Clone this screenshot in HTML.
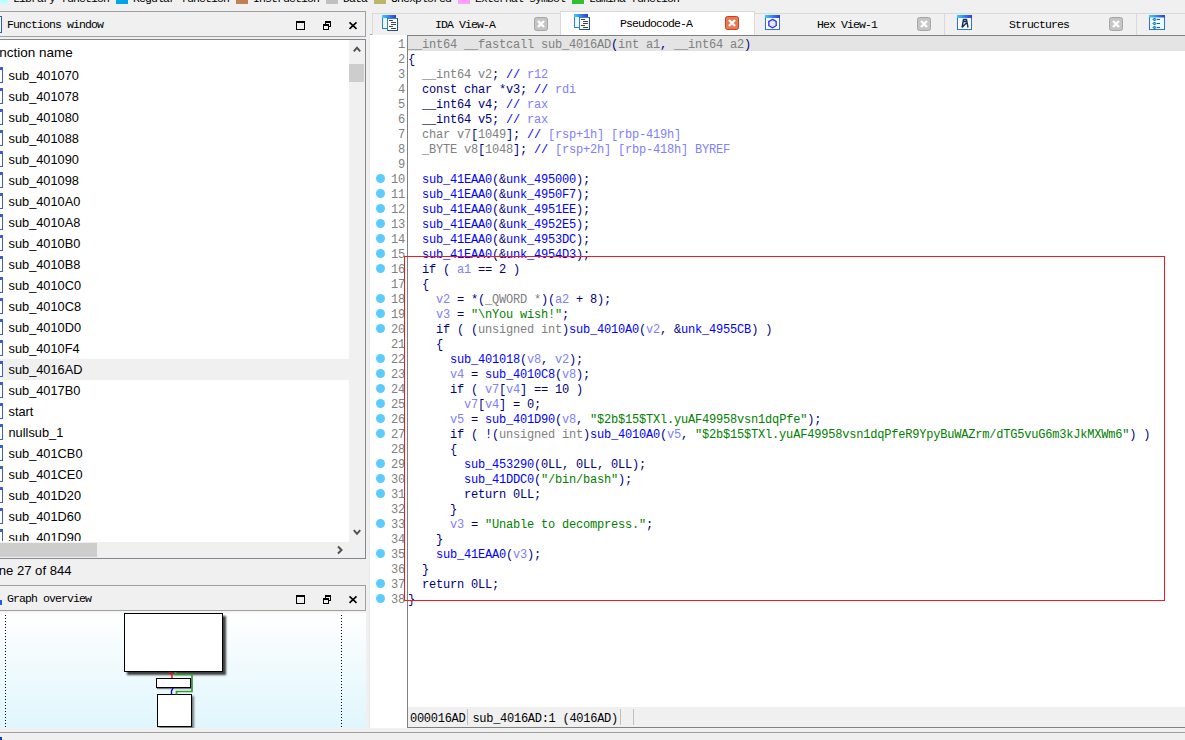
<!DOCTYPE html>
<html><head><meta charset="utf-8"><title>IDA</title>
<style>
*{box-sizing:border-box;margin:0;padding:0}
html,body{width:1185px;height:740px;overflow:hidden;background:#f0f0f0}
body{position:relative;font-family:"Liberation Sans",sans-serif;color:#000}
.abs,.abs *{position:absolute}
i{display:block;font-style:normal}
/* SimSun-like UI text */
.ss{font-family:"Liberation Mono",monospace;font-size:11.5px;letter-spacing:-0.9px;line-height:14px;white-space:pre;color:#000}
/* legend */
.lg{position:absolute;top:-8px;height:12px;width:12px}
.lt{position:absolute;top:-8px}
/* panels */
.ttl{position:absolute;left:-1px;width:367px;height:26px;border:1px solid #a0a0a0;background:#f0f0f0}
/* function list */
#fl{position:absolute;left:-1px;top:39px;width:367px;height:520px;background:#fff;border:1px solid #828790;overflow:hidden}
.fr{position:absolute;left:0;width:349px;height:21px;font-size:12.8px;line-height:21px;white-space:pre}
.fr span{position:absolute;left:8.500px;top:0}
.fr.sel{background:#f0f0f0}
.fi{position:absolute;left:-6px;top:2px;width:9px;height:16px;border:1px solid #3a5fcd;border-top:3px solid #3a5fcd;background:#fff}
/* code */
#code{position:absolute;left:370px;top:35px;width:815px;height:693px;background:#fff;overflow:hidden}
.mono{font-family:"Liberation Mono",monospace;font-size:12px;letter-spacing:-0.2px;white-space:pre}
.ln{position:absolute;left:372px;width:33px;height:15px;line-height:15px;text-align:right;color:#808080;font-family:"Liberation Mono",monospace;font-size:12px;letter-spacing:-0.2px}
.cl{position:absolute;left:408px;height:15px;line-height:15px;font-family:"Liberation Mono",monospace;font-size:12px;letter-spacing:-0.2px;white-space:pre}
.dot{position:absolute;left:376px;width:9px;height:9px;border-radius:50%;background:#5ccbff}
.n{color:#000080}.b{color:#0000ff}.g{color:#808080}.p{color:#8080ff}.s{color:#008000}.c{color:#8080ff}
/* tabs */
.tab{position:absolute;top:13px;height:22px;background:#f0f0f0;border:1px solid #d9d9d9;border-bottom:none}
.tab.act{top:11px;height:24px;background:#fff;border-color:#d9d9d9}
.tx{position:absolute;top:18px}
.cbs{position:absolute}
.cb{position:absolute;width:14px;height:14px;border-radius:3px;background:#b4b4b4;border:1px solid #9a9a9a}
.cb.r{background:#db6448;border-color:#c6492f}
.cb:before,.cb:after{content:"";position:absolute;left:2px;top:5px;width:8px;height:2px;background:#fff;transform:rotate(45deg)}
.cb:after{transform:rotate(-45deg)}
</style></head><body>

<!-- legend strip -->
<i class="lg" style="left:-4px;background:#c0ffff"></i><span class="ss lt" style="left:13px">Library function</span>
<i class="lg" style="left:116px;background:#00a2e8"></i><span class="ss lt" style="left:133px">Regular function</span>
<i class="lg" style="left:236px;background:#c08050"></i><span class="ss lt" style="left:253px">Instruction</span>
<i class="lg" style="left:326px;background:#c0c0c0"></i><span class="ss lt" style="left:343px">Data</span>
<i class="lg" style="left:374px;background:#b8b868"></i><span class="ss lt" style="left:391px">Unexplored</span>
<i class="lg" style="left:458px;background:#ffa0ff"></i><span class="ss lt" style="left:475px">External symbol</span>
<i class="lg" style="left:572px;background:#30c030"></i><span class="ss lt" style="left:589px">Lumina function</span>

<!-- Functions window title -->
<div class="ttl" style="top:11px"></div>
<i style="position:absolute;left:-2px;top:16px;width:4px;height:17px;border:1px solid #2a5bd7;background:#fff"></i>
<span class="ss" style="position:absolute;left:7px;top:18px">Functions window</span>
<svg style="position:absolute;left:294px;top:19px" width="66" height="12" viewBox="0 0 66 12" fill="none" stroke="#000">
<rect x="2.500" y="2.500" width="8" height="8"/><path d="M2 3h9" stroke-width="2"/>
<rect x="31.500" y="2.500" width="5" height="5"/><path d="M31 3h6" stroke-width="2"/>
<rect x="29.500" y="5.500" width="5" height="5" fill="#f0f0f0"/><path d="M29 6h6" stroke-width="2"/>
<path d="M55.500 3.300l7 6.500M62.500 3.300l-7 6.500" stroke-width="1.600"/>
</svg>

<!-- function list -->
<div id="fl">
<div style="position:absolute;left:0;top:5px;font-size:13.500px;line-height:16px;white-space:pre"><span style="position:absolute;left:-16.500px;top:0">Function name</span></div>
</div>
<div id="flrows" style="position:absolute;left:0;top:0;width:349px;height:541px;overflow:hidden">
<div class="fr" style="top:65px"><i class="fi"></i><span>sub_401070</span></div>
<div class="fr" style="top:86px"><i class="fi"></i><span>sub_401078</span></div>
<div class="fr" style="top:107px"><i class="fi"></i><span>sub_401080</span></div>
<div class="fr" style="top:128px"><i class="fi"></i><span>sub_401088</span></div>
<div class="fr" style="top:149px"><i class="fi"></i><span>sub_401090</span></div>
<div class="fr" style="top:170px"><i class="fi"></i><span>sub_401098</span></div>
<div class="fr" style="top:191px"><i class="fi"></i><span>sub_4010A0</span></div>
<div class="fr" style="top:212px"><i class="fi"></i><span>sub_4010A8</span></div>
<div class="fr" style="top:233px"><i class="fi"></i><span>sub_4010B0</span></div>
<div class="fr" style="top:254px"><i class="fi"></i><span>sub_4010B8</span></div>
<div class="fr" style="top:275px"><i class="fi"></i><span>sub_4010C0</span></div>
<div class="fr" style="top:296px"><i class="fi"></i><span>sub_4010C8</span></div>
<div class="fr" style="top:317px"><i class="fi"></i><span>sub_4010D0</span></div>
<div class="fr" style="top:338px"><i class="fi"></i><span>sub_4010F4</span></div>
<div class="fr sel" style="top:359px"><i class="fi"></i><span>sub_4016AD</span></div>
<div class="fr" style="top:380px"><i class="fi"></i><span>sub_4017B0</span></div>
<div class="fr" style="top:401px"><i class="fi"></i><span>start</span></div>
<div class="fr" style="top:422px"><i class="fi"></i><span>nullsub_1</span></div>
<div class="fr" style="top:443px"><i class="fi"></i><span>sub_401CB0</span></div>
<div class="fr" style="top:464px"><i class="fi"></i><span>sub_401CE0</span></div>
<div class="fr" style="top:485px"><i class="fi"></i><span>sub_401D20</span></div>
<div class="fr" style="top:506px"><i class="fi"></i><span>sub_401D60</span></div>
<div class="fr" style="top:527px"><i class="fi"></i><span>sub_401D90</span></div>
</div>
<!-- v scrollbar -->
<div style="position:absolute;left:349px;top:40px;width:16px;height:502px;background:#f0f0f0"></div>
<div style="position:absolute;left:349px;top:64px;width:15px;height:18px;background:#cdcdcd"></div>
<svg style="position:absolute;left:352px;top:45px" width="10" height="8" viewBox="0 0 10 8" fill="none" stroke="#505050" stroke-width="2"><path d="M1.800 6.300l3.200-3.600 3.200 3.600"/></svg>
<svg style="position:absolute;left:352px;top:528px" width="10" height="8" viewBox="0 0 10 8" fill="none" stroke="#505050" stroke-width="2"><path d="M1.800 2.200l3.200 3.600 3.200-3.600"/></svg>
<!-- h scrollbar -->
<div style="position:absolute;left:0;top:542px;width:365px;height:16px;background:#f0f0f0"></div>
<div style="position:absolute;left:0;top:543px;width:97px;height:14px;background:#cdcdcd"></div>
<svg style="position:absolute;left:336px;top:545px" width="8" height="10" viewBox="0 0 8 10" fill="none" stroke="#505050" stroke-width="2"><path d="M2 1.500l3.500 3.500-3.500 3.500"/></svg>


<div style="position:absolute;left:-11.500px;top:563px;font-size:13.100px;line-height:16px;white-space:pre">Line 27 of 844</div>

<!-- Graph overview title -->
<div class="ttl" style="top:585px"></div>
<span class="ss" style="position:absolute;left:7px;top:592px">Graph overview</span>
<svg style="position:absolute;left:294px;top:593px" width="66" height="12" viewBox="0 0 66 12" fill="none" stroke="#000">
<rect x="2.500" y="2.500" width="8" height="8"/><path d="M2 3h9" stroke-width="2"/>
<rect x="31.500" y="2.500" width="5" height="5"/><path d="M31 3h6" stroke-width="2"/>
<rect x="29.500" y="5.500" width="5" height="5" fill="#f0f0f0"/><path d="M29 6h6" stroke-width="2"/>
<path d="M55.500 3.300l7 6.500M62.500 3.300l-7 6.500" stroke-width="1.600"/>
</svg>
<!-- graph -->
<div style="position:absolute;left:0;top:611px;width:366px;height:117px;background:linear-gradient(#ffffff,#e0f6fd);overflow:hidden">
<i style="position:absolute;left:0;top:0;width:366px;height:2px;background:#f4f4f4"></i><i style="position:absolute;left:5px;top:4px;height:113px;width:1px;background:repeating-linear-gradient(#000 0,#000 1px,transparent 1px,transparent 3px)"></i>
<i style="position:absolute;left:341px;top:4px;height:113px;width:1px;background:repeating-linear-gradient(#000 0,#000 1px,transparent 1px,transparent 3px)"></i>
<i style="position:absolute;left:124px;top:2px;width:99px;height:59px;border:1px solid #000;background:#fff;box-shadow:3px 3px 2px rgba(0,0,0,.75)"></i>
<i style="position:absolute;left:156px;top:67px;width:35px;height:10px;border:1px solid #000;background:#fff;box-shadow:1px 1px 1px rgba(0,0,0,.5)"></i>
<i style="position:absolute;left:157px;top:83px;width:35px;height:33px;border:1px solid #000;background:#fff;box-shadow:2px 2px 2px rgba(0,0,0,.5)"></i>
<svg style="position:absolute;left:150px;top:60px" width="60" height="30" viewBox="0 0 60 30" fill="none"><path d="M19.500 1l2.500 3v3" stroke="#f00" stroke-width="1.400"/><path d="M25.500 1v2.500h16.500v17h-15.500v3" stroke="#3a9a3a" stroke-width="1.700"/><path d="M23 17l-1.500 3v3" stroke="#00f" stroke-width="1.400"/></svg>
</div>
<i style="position:absolute;left:-1px;top:600px;width:3px;height:5px;background:#1f5fe0"></i>
<div style="position:absolute;left:0;top:732px;width:1185px;height:1px;background:#a0a0a0"></div>
<i style="position:absolute;left:0;top:737px;width:2px;height:4px;background:#1038d8"></i>

<!-- code panel -->
<div id="code"></div>
<div style="position:absolute;left:408px;top:36px;width:777px;height:15px;background:#e4e4e4"></div>
<div style="position:absolute;left:407px;top:36px;width:1px;height:691px;background:#808080"></div>
<div style="position:absolute;left:369px;top:35px;width:1px;height:693px;background:#e9e9e9"></div>
<div class="ln" style="top:38px">1</div>
<div class="cl" style="top:38px"><span class="g">__int64 __fastcall sub_4016AD</span><span class="n">(</span><span class="g">int a1</span><span class="n">,</span><span class="g"> __int64 a2</span><span class="n">)</span></div>
<div class="ln" style="top:53px">2</div>
<div class="cl" style="top:53px"><span class="n">{</span></div>
<div class="ln" style="top:68px">3</div>
<div class="cl" style="top:68px"><span class="g">  __int64 v2</span><span class="n">; </span><span class="b">// </span><span class="c">r12</span></div>
<div class="ln" style="top:83px">4</div>
<div class="cl" style="top:83px"><span class="n">  const char *v3; </span><span class="b">// </span><span class="c">rdi</span></div>
<div class="ln" style="top:98px">5</div>
<div class="cl" style="top:98px"><span class="n">  __int64 v4; </span><span class="b">// </span><span class="c">rax</span></div>
<div class="ln" style="top:113px">6</div>
<div class="cl" style="top:113px"><span class="n">  __int64 v5; </span><span class="b">// </span><span class="c">rax</span></div>
<div class="ln" style="top:128px">7</div>
<div class="cl" style="top:128px"><span class="g">  char v7</span><span class="n">[</span><span class="g">1049</span><span class="n">]; </span><span class="b">// </span><span class="c">[rsp+1h] [rbp-419h]</span></div>
<div class="ln" style="top:143px">8</div>
<div class="cl" style="top:143px"><span class="g">  _BYTE v8</span><span class="n">[</span><span class="g">1048</span><span class="n">]; </span><span class="b">// </span><span class="c">[rsp+2h] [rbp-418h] BYREF</span></div>
<div class="ln" style="top:158px">9</div>
<div class="cl" style="top:158px"></div>
<i class="dot" style="top:174px"></i>
<div class="ln" style="top:173px">10</div>
<div class="cl" style="top:173px"><span class="b">  sub_41EAA0</span><span class="n">(&amp;</span><span class="b">unk_495000</span><span class="n">);</span></div>
<i class="dot" style="top:189px"></i>
<div class="ln" style="top:188px">11</div>
<div class="cl" style="top:188px"><span class="b">  sub_41EAA0</span><span class="n">(&amp;</span><span class="b">unk_4950F7</span><span class="n">);</span></div>
<i class="dot" style="top:204px"></i>
<div class="ln" style="top:203px">12</div>
<div class="cl" style="top:203px"><span class="b">  sub_41EAA0</span><span class="n">(&amp;</span><span class="b">unk_4951EE</span><span class="n">);</span></div>
<i class="dot" style="top:219px"></i>
<div class="ln" style="top:218px">13</div>
<div class="cl" style="top:218px"><span class="b">  sub_41EAA0</span><span class="n">(&amp;</span><span class="b">unk_4952E5</span><span class="n">);</span></div>
<i class="dot" style="top:234px"></i>
<div class="ln" style="top:233px">14</div>
<div class="cl" style="top:233px"><span class="b">  sub_41EAA0</span><span class="n">(&amp;</span><span class="b">unk_4953DC</span><span class="n">);</span></div>
<i class="dot" style="top:249px"></i>
<div class="ln" style="top:248px">15</div>
<div class="cl" style="top:248px"><span class="b">  sub_41EAA0</span><span class="n">(&amp;</span><span class="b">unk_4954D3</span><span class="n">);</span></div>
<i class="dot" style="top:264px"></i>
<div class="ln" style="top:263px">16</div>
<div class="cl" style="top:263px"><span class="n">  if ( </span><span class="p">a1</span><span class="n"> == 2 )</span></div>
<div class="ln" style="top:278px">17</div>
<div class="cl" style="top:278px"><span class="n">  {</span></div>
<i class="dot" style="top:294px"></i>
<div class="ln" style="top:293px">18</div>
<div class="cl" style="top:293px"><span class="p">    v2</span><span class="n"> = *(</span><span class="g">_QWORD *</span><span class="n">)(</span><span class="p">a2</span><span class="n"> + 8);</span></div>
<i class="dot" style="top:309px"></i>
<div class="ln" style="top:308px">19</div>
<div class="cl" style="top:308px"><span class="p">    v3</span><span class="n"> = </span><span class="s">"\nYou wish!"</span><span class="n">;</span></div>
<i class="dot" style="top:324px"></i>
<div class="ln" style="top:323px">20</div>
<div class="cl" style="top:323px"><span class="n">    if ( (</span><span class="g">unsigned int</span><span class="n">)</span><span class="b">sub_4010A0</span><span class="n">(</span><span class="p">v2</span><span class="n">, &amp;</span><span class="b">unk_4955CB</span><span class="n">) )</span></div>
<div class="ln" style="top:338px">21</div>
<div class="cl" style="top:338px"><span class="n">    {</span></div>
<i class="dot" style="top:354px"></i>
<div class="ln" style="top:353px">22</div>
<div class="cl" style="top:353px"><span class="b">      sub_401018</span><span class="n">(</span><span class="p">v8</span><span class="n">, </span><span class="p">v2</span><span class="n">);</span></div>
<i class="dot" style="top:369px"></i>
<div class="ln" style="top:368px">23</div>
<div class="cl" style="top:368px"><span class="p">      v4</span><span class="n"> = </span><span class="b">sub_4010C8</span><span class="n">(</span><span class="p">v8</span><span class="n">);</span></div>
<i class="dot" style="top:384px"></i>
<div class="ln" style="top:383px">24</div>
<div class="cl" style="top:383px"><span class="n">      if ( </span><span class="p">v7</span><span class="n">[</span><span class="p">v4</span><span class="n">] == 10 )</span></div>
<i class="dot" style="top:399px"></i>
<div class="ln" style="top:398px">25</div>
<div class="cl" style="top:398px"><span class="p">        v7</span><span class="n">[</span><span class="p">v4</span><span class="n">] = 0;</span></div>
<i class="dot" style="top:414px"></i>
<div class="ln" style="top:413px">26</div>
<div class="cl" style="top:413px"><span class="p">      v5</span><span class="n"> = </span><span class="b">sub_401D90</span><span class="n">(</span><span class="p">v8</span><span class="n">, </span><span class="s">"$2b$15$TXl.yuAF49958vsn1dqPfe"</span><span class="n">);</span></div>
<i class="dot" style="top:429px"></i>
<div class="ln" style="top:428px">27</div>
<div class="cl" style="top:428px"><span class="n">      if ( !(</span><span class="g">unsigned int</span><span class="n">)</span><span class="b">sub_4010A0</span><span class="n">(</span><span class="p">v5</span><span class="n">, </span><span class="s">"$2b$15$TXl.yuAF49958vsn1dqPfeR9YpyBuWAZrm/dTG5vuG6m3kJkMXWm6"</span><span class="n">) )</span></div>
<div class="ln" style="top:443px">28</div>
<div class="cl" style="top:443px"><span class="n">      {</span></div>
<i class="dot" style="top:459px"></i>
<div class="ln" style="top:458px">29</div>
<div class="cl" style="top:458px"><span class="b">        sub_453290</span><span class="n">(0LL, 0LL, 0LL);</span></div>
<i class="dot" style="top:474px"></i>
<div class="ln" style="top:473px">30</div>
<div class="cl" style="top:473px"><span class="b">        sub_41DDC0</span><span class="n">(</span><span class="s">"/bin/bash"</span><span class="n">);</span></div>
<i class="dot" style="top:489px"></i>
<div class="ln" style="top:488px">31</div>
<div class="cl" style="top:488px"><span class="n">        return 0LL;</span></div>
<div class="ln" style="top:503px">32</div>
<div class="cl" style="top:503px"><span class="n">      }</span></div>
<i class="dot" style="top:519px"></i>
<div class="ln" style="top:518px">33</div>
<div class="cl" style="top:518px"><span class="p">      v3</span><span class="n"> = </span><span class="s">"Unable to decompress."</span><span class="n">;</span></div>
<div class="ln" style="top:533px">34</div>
<div class="cl" style="top:533px"><span class="n">    }</span></div>
<i class="dot" style="top:549px"></i>
<div class="ln" style="top:548px">35</div>
<div class="cl" style="top:548px"><span class="b">    sub_41EAA0</span><span class="n">(</span><span class="p">v3</span><span class="n">);</span></div>
<div class="ln" style="top:563px">36</div>
<div class="cl" style="top:563px"><span class="n">  }</span></div>
<i class="dot" style="top:579px"></i>
<div class="ln" style="top:578px">37</div>
<div class="cl" style="top:578px"><span class="n">  return 0LL;</span></div>
<i class="dot" style="top:594px"></i>
<div class="ln" style="top:593px">38</div>
<div class="cl" style="top:593px"><span class="n">}</span></div>
<div style="position:absolute;left:404px;top:256px;width:761px;height:345px;border:1px solid #ed1c24"></div>
<!-- status line -->
<div style="position:absolute;left:408px;top:707px;width:777px;height:20px;background:#f0f0f0"></div>
<div style="position:absolute;left:407px;top:727px;width:778px;height:1px;background:#808080"></div>
<div class="mono" style="position:absolute;left:410px;top:712px;line-height:15px;font-size:12px;letter-spacing:-0.27px;color:#000">000016AD sub_4016AD:1 (4016AD)</div>
<i style="position:absolute;left:467px;top:709px;width:1px;height:16px;background:#c0c0c0"></i>
<i style="position:absolute;left:620px;top:709px;width:1px;height:16px;background:#c0c0c0"></i>
<i style="position:absolute;left:633px;top:709px;width:1px;height:16px;background:#c0c0c0"></i>

<!-- tab bar -->
<div style="position:absolute;left:370px;top:34px;width:815px;height:1px;background:#a0a0a0"></div>
<div style="position:absolute;left:407px;top:35px;width:778px;height:1px;background:#808080"></div>
<div class="tab" style="left:372px;width:190px"></div>
<div class="tab" style="left:754px;width:191px"></div>
<div class="tab" style="left:944px;width:193px"></div>
<div class="tab" style="left:1136px;width:60px"></div>
<div class="tab act" style="left:560px;width:195px"></div>
<span class="ss tx" style="left:435px">IDA View-A</span>
<span class="ss tx" style="left:620px;top:17px">Pseudocode-A</span>
<span class="ss tx" style="left:817px">Hex View-1</span>
<span class="ss tx" style="left:1009px">Structures</span>
<svg class="cbs" style="left:534px;top:17px" width="14" height="14"><rect x=".5" y=".5" width="13" height="13" rx="2" fill="#c4c4c4" stroke="#a6a6a6"/><path d="M4 4l6 6M10 4l-6 6" stroke="#fff" stroke-width="2.400" fill="none"/></svg>
<svg class="cbs" style="left:725px;top:16px" width="14" height="14"><rect x=".5" y=".5" width="13" height="13" rx="2" fill="#e57a50" stroke="#d93a22"/><path d="M4 4l6 6M10 4l-6 6" stroke="#fff" stroke-width="2.400" fill="none"/></svg>
<svg class="cbs" style="left:917px;top:17px" width="14" height="14"><rect x=".5" y=".5" width="13" height="13" rx="2" fill="#c4c4c4" stroke="#a6a6a6"/><path d="M4 4l6 6M10 4l-6 6" stroke="#fff" stroke-width="2.400" fill="none"/></svg>
<svg class="cbs" style="left:1109px;top:17px" width="14" height="14"><rect x=".5" y=".5" width="13" height="13" rx="2" fill="#c4c4c4" stroke="#a6a6a6"/><path d="M4 4l6 6M10 4l-6 6" stroke="#fff" stroke-width="2.400" fill="none"/></svg>
<!-- tab icons -->
<svg class="cbs" style="left:382px;top:15px" width="16" height="16"><rect x=".5" y=".5" width="13" height="13" fill="#e8fbff" stroke="#2f7fe8"/><rect x="0" y="0" width="1" height="3" fill="#38c8ff"/><rect x="1" y="0" width="1" height="3" fill="#38befc"/><rect x="2" y="0" width="1" height="3" fill="#37b3fa"/><rect x="3" y="0" width="1" height="3" fill="#37a9f7"/><rect x="4" y="0" width="1" height="3" fill="#369ef4"/><rect x="5" y="0" width="1" height="3" fill="#3694f2"/><rect x="6" y="0" width="1" height="3" fill="#3689ef"/><rect x="7" y="0" width="1" height="3" fill="#357fec"/><rect x="8" y="0" width="1" height="3" fill="#3574e9"/><rect x="9" y="0" width="1" height="3" fill="#356ae7"/><rect x="10" y="0" width="1" height="3" fill="#345fe4"/><rect x="11" y="0" width="1" height="3" fill="#3455e1"/><rect x="12" y="0" width="1" height="3" fill="#334adf"/><rect x="13" y="0" width="1" height="3" fill="#3340dc"/><rect x="5.500" y="3.500" width="10" height="12" fill="#fff" stroke="#1f4f8c"/><path d="M5.500 3.500h10" stroke="#3f7fc0"/><path d="M5.500 3.500v12" stroke="#3f7fc0"/><path d="M7 5.500h4M9 7.500h5M9 9.500h5M7 11.500h4M9 13.500h5" stroke="#3c4650"/></svg>
<svg class="cbs" style="left:574px;top:14px" width="16" height="16"><rect x=".5" y=".5" width="13" height="13" fill="#e8fbff" stroke="#2f7fe8"/><rect x="0" y="0" width="1" height="3" fill="#38c8ff"/><rect x="1" y="0" width="1" height="3" fill="#38befc"/><rect x="2" y="0" width="1" height="3" fill="#37b3fa"/><rect x="3" y="0" width="1" height="3" fill="#37a9f7"/><rect x="4" y="0" width="1" height="3" fill="#369ef4"/><rect x="5" y="0" width="1" height="3" fill="#3694f2"/><rect x="6" y="0" width="1" height="3" fill="#3689ef"/><rect x="7" y="0" width="1" height="3" fill="#357fec"/><rect x="8" y="0" width="1" height="3" fill="#3574e9"/><rect x="9" y="0" width="1" height="3" fill="#356ae7"/><rect x="10" y="0" width="1" height="3" fill="#345fe4"/><rect x="11" y="0" width="1" height="3" fill="#3455e1"/><rect x="12" y="0" width="1" height="3" fill="#334adf"/><rect x="13" y="0" width="1" height="3" fill="#3340dc"/><rect x="5.500" y="3.500" width="10" height="12" fill="#fff" stroke="#1f4f8c"/><path d="M5.500 3.500h10" stroke="#3f7fc0"/><path d="M5.500 3.500v12" stroke="#3f7fc0"/><path d="M7 5.500h4M9 7.500h5M9 9.500h5M7 11.500h4M9 13.500h5" stroke="#3c4650"/></svg>
<svg class="cbs" style="left:765px;top:15px" width="16" height="16"><rect x=".5" y=".5" width="14" height="14" fill="#fff" stroke="#2f6fe0"/><rect x="0" y="0" width="1" height="3" fill="#38c8ff"/><rect x="1" y="0" width="1" height="3" fill="#38befc"/><rect x="2" y="0" width="1" height="3" fill="#37b5fa"/><rect x="3" y="0" width="1" height="3" fill="#37abf8"/><rect x="4" y="0" width="1" height="3" fill="#37a1f5"/><rect x="5" y="0" width="1" height="3" fill="#3697f2"/><rect x="6" y="0" width="1" height="3" fill="#368ef0"/><rect x="7" y="0" width="1" height="3" fill="#3684ee"/><rect x="8" y="0" width="1" height="3" fill="#357aeb"/><rect x="9" y="0" width="1" height="3" fill="#3571e8"/><rect x="10" y="0" width="1" height="3" fill="#3467e6"/><rect x="11" y="0" width="1" height="3" fill="#345de4"/><rect x="12" y="0" width="1" height="3" fill="#3453e1"/><rect x="13" y="0" width="1" height="3" fill="#334ade"/><rect x="14" y="0" width="1" height="3" fill="#3340dc"/><path d="M7.500 4.400l3.700 2.100v4.200l-3.700 2.100-3.700-2.100v-4.200z" fill="#dfe9ff" stroke="#2a2aff" stroke-width="1.300"/></svg>
<svg class="cbs" style="left:957px;top:15px" width="16" height="16"><rect x=".5" y=".5" width="14" height="14" fill="#fff" stroke="#2f6fe0"/><rect x="0" y="0" width="1" height="3" fill="#38c8ff"/><rect x="1" y="0" width="1" height="3" fill="#38befc"/><rect x="2" y="0" width="1" height="3" fill="#37b5fa"/><rect x="3" y="0" width="1" height="3" fill="#37abf8"/><rect x="4" y="0" width="1" height="3" fill="#37a1f5"/><rect x="5" y="0" width="1" height="3" fill="#3697f2"/><rect x="6" y="0" width="1" height="3" fill="#368ef0"/><rect x="7" y="0" width="1" height="3" fill="#3684ee"/><rect x="8" y="0" width="1" height="3" fill="#357aeb"/><rect x="9" y="0" width="1" height="3" fill="#3571e8"/><rect x="10" y="0" width="1" height="3" fill="#3467e6"/><rect x="11" y="0" width="1" height="3" fill="#345de4"/><rect x="12" y="0" width="1" height="3" fill="#3453e1"/><rect x="13" y="0" width="1" height="3" fill="#334ade"/><rect x="14" y="0" width="1" height="3" fill="#3340dc"/><path d="M5 12.500l1.500-8h3l1.500 8M6 6.500h4M9.300 8l-4.300 4.500" fill="none" stroke="#12305c" stroke-width="1.400"/></svg>
<svg class="cbs" style="left:1149px;top:15px" width="16" height="16"><rect x=".5" y=".5" width="15" height="14" fill="#e8ffff" stroke="#2f6fe0"/><rect x="0" y="0" width="1" height="2.5" fill="#38c8ff"/><rect x="1" y="0" width="1" height="2.5" fill="#38bffd"/><rect x="2" y="0" width="1" height="2.5" fill="#37b6fa"/><rect x="3" y="0" width="1" height="2.5" fill="#37adf8"/><rect x="4" y="0" width="1" height="2.5" fill="#37a4f6"/><rect x="5" y="0" width="1" height="2.5" fill="#369bf3"/><rect x="6" y="0" width="1" height="2.5" fill="#3692f1"/><rect x="7" y="0" width="1" height="2.5" fill="#3689ef"/><rect x="8" y="0" width="1" height="2.5" fill="#357fec"/><rect x="9" y="0" width="1" height="2.5" fill="#3576ea"/><rect x="10" y="0" width="1" height="2.5" fill="#356de8"/><rect x="11" y="0" width="1" height="2.5" fill="#3464e5"/><rect x="12" y="0" width="1" height="2.5" fill="#345be3"/><rect x="13" y="0" width="1" height="2.5" fill="#3452e1"/><rect x="14" y="0" width="1" height="2.5" fill="#3349de"/><rect x="15" y="0" width="1" height="2.5" fill="#3340dc"/><path d="M5.500 3l1.500 1.500-1.500 1.500-1.500-1.500zM5.500 7l1.500 1.500-1.500 1.500-1.500-1.500zM5.500 11l1.500 1.500-1.500 1.500-1.500-1.500z" fill="#20d8f0" stroke="#10308a" stroke-width=".8"/><path d="M8 4.500h3M8 8.500h3M8 12.500h3" stroke="#1a50d0" stroke-width="1.200"/></svg>
</body></html>
